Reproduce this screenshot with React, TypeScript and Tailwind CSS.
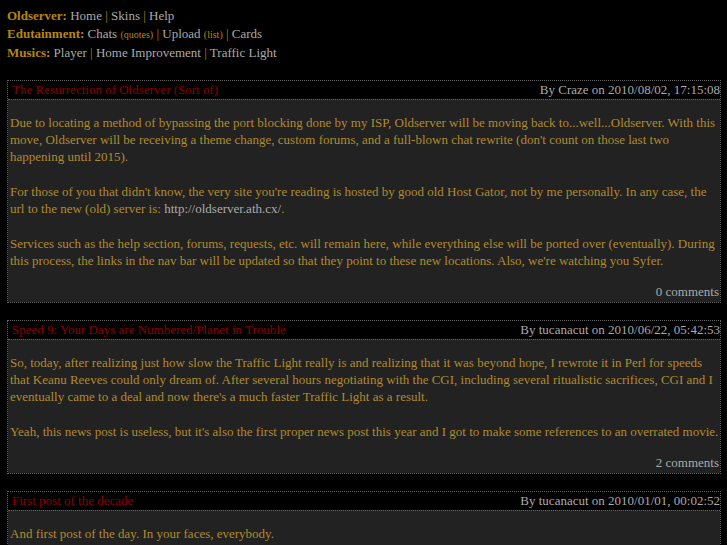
import React from "react";

const posts = [
  {
    title: "The Resurrection of Oldserver (Sort of)",
    by: "By Craze on 2010/08/02, 17:15:08",
    body: [
      <>Due to locating a method of bypassing the port blocking done by my ISP, Oldserver will be moving back to...well...Oldserver. With this move, Oldserver will be receiving a theme change, custom forums, and a full-blown chat rewrite (don't count on those last two happening until 2015).</>,
      <>For those of you that didn't know, the very site you're reading is hosted by good old Host Gator, not by me personally. In any case, the url to the new (old) server is: <a className="text-[#aaaaaa]">http://oldserver.ath.cx/</a>.</>,
      <>Services such as the help section, forums, requests, etc. will remain here, while everything else will be ported over (eventually). During this process, the links in the nav bar will be updated so that they point to these new locations. Also, we're watching you Syfer.</>,
    ],
    comments: "0 comments",
  },
  {
    title: "Speed 9: Your Days are Numbered/Planet in Trouble",
    by: "By tucanacut on 2010/06/22, 05:42:53",
    body: [
      <>So, today, after realizing just how slow the Traffic Light really is and realizing that it was beyond hope, I rewrote it in Perl for speeds that Keanu Reeves could only dream of. After several hours negotiating with the CGI, including several ritualistic sacrifices, CGI and I eventually came to a deal and now there's a much faster Traffic Light as a result.</>,
      <>Yeah, this news post is useless, but it's also the first proper news post this year and I got to make some references to an overrated movie.</>,
    ],
    comments: "2 comments",
  },
  {
    title: "First post of the decade",
    by: "By tucanacut on 2010/01/01, 00:02:52",
    body: [<>And first post of the day. In your faces, everybody.</>],
    comments: "0 comments",
  },
];

const Sep = () => <span className="text-[#b8860b]"> | </span>;

const App = () => {
  return (
    <div className="min-h-[545px] bg-black font-['Liberation_Serif',serif] text-[13px] text-[#b08a2e]">
      <div className="px-[7px] pt-[7px] leading-[18px] text-[#b8860b]">
        <div>
          <b>Oldserver:</b> <span className="text-[#aaaaaa]">Home</span>
          <Sep />
          <span className="text-[#aaaaaa]">Skins</span>
          <Sep />
          <span className="text-[#aaaaaa]">Help</span>
        </div>
        <div>
          <b>Edutainment:</b> <span className="text-[#aaaaaa]">Chats</span>{" "}
          <span className="text-[10px]">(quotes)</span>
          <Sep />
          <span className="text-[#aaaaaa]">Upload</span>{" "}
          <span className="text-[10px]">(list)</span>
          <Sep />
          <span className="text-[#aaaaaa]">Cards</span>
        </div>
        <div>
          <b>Musics:</b> <span className="text-[#aaaaaa]">Player</span>
          <Sep />
          <span className="text-[#aaaaaa]">Home Improvement</span>
          <Sep />
          <span className="text-[#aaaaaa]">Traffic Light</span>
        </div>
      </div>

      <div className="flex flex-col gap-[17px] pl-[7px] pr-[6px] pt-[18px]">
        {React.Children.toArray(
          posts.map((post) => (
            <div className="border border-dotted border-[#666666]">
              <div className="flex justify-between bg-black pl-[4px] leading-[18px]">
                <span className="text-[#8b0000]">{post.title}</span>
                <span className="text-[#aaaaaa]">{post.by}</span>
              </div>
              <div className="flex flex-col gap-[18px] border-t border-dotted border-[#666666] bg-[#222222] pl-[2px] pr-[1px] pt-[14px] leading-[17px]">
                {React.Children.toArray(post.body.map((p) => <p>{p}</p>))}
                <div className="-mt-[4px] pb-[2px] text-right text-[#aaaaaa]">{post.comments}</div>
              </div>
            </div>
          ))
        )}
      </div>
    </div>
  );
};

export default App;
